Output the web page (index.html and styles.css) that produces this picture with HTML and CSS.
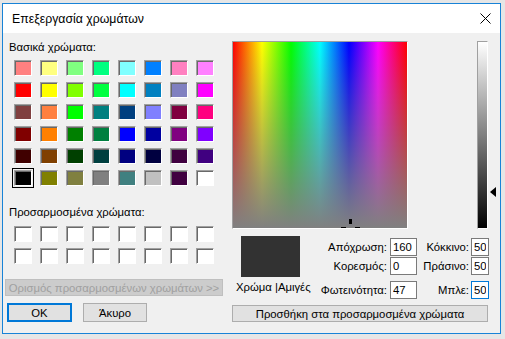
FILE: index.html
```html
<!DOCTYPE html>
<html lang="el">
<head>
    <meta charset="UTF-8">
    <meta name="viewport" content="width=device-width, initial-scale=1.0">
    <title>Επεξεργασία χρωμάτων</title>
    <link rel="stylesheet" href="styles.css">
</head>
<body>
    <div class="window">
        <div class="titlebar">
            <span class="title">Επεξεργασία χρωμάτων</span>
            <svg class="close" width="11" height="11" viewBox="0 0 11 11">
                <path d="M0.5 0.5 L10.5 10.5 M10.5 0.5 L0.5 10.5" stroke="#000" stroke-width="1" fill="none"/>
            </svg>
        </div>

        <div class="content">
            <div class="left">
                <div class="label">Βασικά χρώματα:</div>
                <div class="swatches">
                    <span style="background:#ff8080"></span><span style="background:#ffff80"></span><span style="background:#80ff80"></span><span style="background:#00ff80"></span><span style="background:#80ffff"></span><span style="background:#0080ff"></span><span style="background:#ff80c0"></span><span style="background:#ff80ff"></span>
                    <span style="background:#ff0000"></span><span style="background:#ffff00"></span><span style="background:#80ff00"></span><span style="background:#00ff40"></span><span style="background:#00ffff"></span><span style="background:#0080c0"></span><span style="background:#8080c0"></span><span style="background:#ff00ff"></span>
                    <span style="background:#804040"></span><span style="background:#ff8040"></span><span style="background:#00ff00"></span><span style="background:#008080"></span><span style="background:#004080"></span><span style="background:#8080ff"></span><span style="background:#800040"></span><span style="background:#ff0080"></span>
                    <span style="background:#800000"></span><span style="background:#ff8000"></span><span style="background:#008000"></span><span style="background:#008040"></span><span style="background:#0000ff"></span><span style="background:#0000a0"></span><span style="background:#800080"></span><span style="background:#8000ff"></span>
                    <span style="background:#400000"></span><span style="background:#804000"></span><span style="background:#004000"></span><span style="background:#004040"></span><span style="background:#000080"></span><span style="background:#000040"></span><span style="background:#400040"></span><span style="background:#400080"></span>
                    <span class="selected" style="background:#000000"></span><span style="background:#808000"></span><span style="background:#808040"></span><span style="background:#808080"></span><span style="background:#408080"></span><span style="background:#c0c0c0"></span><span style="background:#400040"></span><span style="background:#ffffff"></span>
                </div>

                <div class="label custom-label">Προσαρμοσμένα χρώματα:</div>
                <div class="swatches custom">
                    <span></span><span></span><span></span><span></span><span></span><span></span><span></span><span></span>
                    <span></span><span></span><span></span><span></span><span></span><span></span><span></span><span></span>
                </div>

                <button class="btn define" disabled>Ορισμός προσαρμοσμένων χρωμάτων &gt;&gt;</button>
                <div class="actions">
                    <button class="btn ok">OK</button>
                    <button class="btn cancel">Άκυρο</button>
                </div>
            </div>

            <div class="right">
                <div class="picker">
                    <div class="spectrum">
                        <span class="cross cross-top"></span>
                        <span class="cross cross-left"></span>
                        <span class="cross cross-right"></span>
                    </div>
                    <div class="lum-wrap">
                        <div class="lum"></div>
                        <span class="lum-arrow"></span>
                    </div>
                </div>

                <div class="details">
                    <div class="preview-col">
                        <div class="preview"></div>
                        <div class="preview-label">Χρώμα |Αμιγές</div>
                    </div>
                    <div class="fields">
                        <div class="row">
                            <label class="l1">Απόχρωση:</label><input class="i1" type="text" value="160">
                            <label class="l2">Κόκκινο:</label><input class="i2" type="text" value="50">
                        </div>
                        <div class="row">
                            <label class="l1">Κορεσμός:</label><input class="i1" type="text" value="0">
                            <label class="l2">Πράσινο:</label><input class="i2" type="text" value="50">
                        </div>
                        <div class="row row-last">
                            <label class="l1">Φωτεινότητα:</label><input class="i1" type="text" value="47">
                            <label class="l2">Μπλε:</label><input class="i2 focus" type="text" value="50">
                        </div>
                    </div>
                </div>

                <button class="btn add">Προσθήκη στα προσαρμοσμένα χρώματα</button>
            </div>
        </div>
    </div>
</body>
</html>
```

FILE: styles.css
```css
*{margin: 0; padding: 0; box-sizing: border-box;}
body{background-color: #e6e6e6; font-family: "Liberation Sans", Arial, sans-serif; font-size: 11.3px; color: #000; width: 505px; height: 339px; overflow: hidden;}

.window{margin: 3px 0 0 2px; width: 499px; height: 331px; border: 1px solid #1883d7; background-color: #f0f0f0; display: flex; flex-direction: column;}
.titlebar{height: 29px; background-color: #fff; display: flex; align-items: center; justify-content: space-between; padding: 0 9px 0 9px;}
.title{font-size: 12.3px; line-height: 16px;}
.close{display: block;}

.content{flex: 1; display: flex;}
.left{width: 226px; display: flex; flex-direction: column;}
.label{margin: 7px 0 0 6px; line-height: 14px; height: 14px;}
.custom-label{margin-top: 19px;}

.swatches{margin: 6px 0 0 11px; display: grid; grid-template-columns: repeat(8, 18px); grid-auto-rows: 16px; column-gap: 8px; row-gap: 6px;}
.custom{margin-top: 7px;}
.swatches span{display: block; border: 1px solid; border-color: #a0a0a0 #fff #fff #a0a0a0; box-shadow: inset 1px 1px 0 #696969; background-color: #fff;}
.swatches span.selected{outline: 1px solid #000; outline-offset: 1px;}

.btn{font-family: "Liberation Sans", Arial, sans-serif; font-size: 11.3px; color: #000; background-color: #e1e1e1; border: 1px solid #adadad; display: flex; align-items: center; justify-content: center; white-space: nowrap;}
.define{margin: 15px 0 0 2px; width: 218px; height: 17px; background-color: #cccccc; border-color: #bfbfbf; color: #a0a0a0;}
.actions{display: flex; margin: 7px 0 0 4px;}
.ok{width: 65px; height: 19px; border: 2px solid #0078d7;}
.cancel{width: 64px; height: 19px; margin-left: 11px;}

.right{flex: 1; display: flex; flex-direction: column;}
.picker{display: flex; margin-top: 8px;}
.spectrum{position: relative; overflow: hidden; margin-left: 3px; width: 176px; height: 188px; border: 1px solid; border-color: #a0a0a0 #fff #fff #a0a0a0;
    background: linear-gradient(to bottom, rgba(128,128,128,0), #808080),
                linear-gradient(to right, #f00, #ff0 16.67%, #0f0 33.33%, #0ff 50%, #00f 66.67%, #f0f 83.33%, #f00);}
.cross{position: absolute; background-color: #000;}
.cross-top{left: 116px; top: 177px; width: 3px; height: 5px;}
.cross-left{left: 108px; top: 185px; width: 5px; height: 3px;}
.cross-right{left: 122px; top: 185px; width: 5px; height: 3px;}

.lum-wrap{position: relative; margin-left: 69px;}
.lum{width: 11px; height: 188px; border: 1px solid; border-color: #a0a0a0 #fff #fff #a0a0a0; background: linear-gradient(to bottom, #fff, #000);}
.lum-arrow{position: absolute; left: 13px; top: 146px; width: 0; height: 0; border-top: 5.5px solid transparent; border-bottom: 5.5px solid transparent; border-right: 6px solid #000;}

.details{display: flex;}
.preview-col{width: 79px; padding-left: 7px;}
.preview{margin: 7px 0 0 5px; width: 59px; height: 41px; background-color: #323232;}
.preview-label{margin-top: 3px; line-height: 14px; white-space: nowrap;}

.fields{margin-top: 9px;}
.row{display: flex; align-items: center; height: 18px;}
.row + .row{margin-top: 1px;}
.row-last{margin-top: 6px !important;}
.l1{width: 79px; text-align: right; margin-right: 3px; white-space: nowrap;}
.l2{width: 52px; text-align: right; margin-right: 2px; white-space: nowrap;}
.row input{height: 18px; border: 1px solid #7a7a7a; background-color: #fff; font-family: "Liberation Sans", Arial, sans-serif; font-size: 11.3px; padding: 0 2px; outline: none;}
.i1{width: 27px;}
.i2{width: 18px;}
.row input.focus{border-color: #0078d7;}

.add{margin: 6px 0 0 3px; width: 256px; height: 17px;}
```
